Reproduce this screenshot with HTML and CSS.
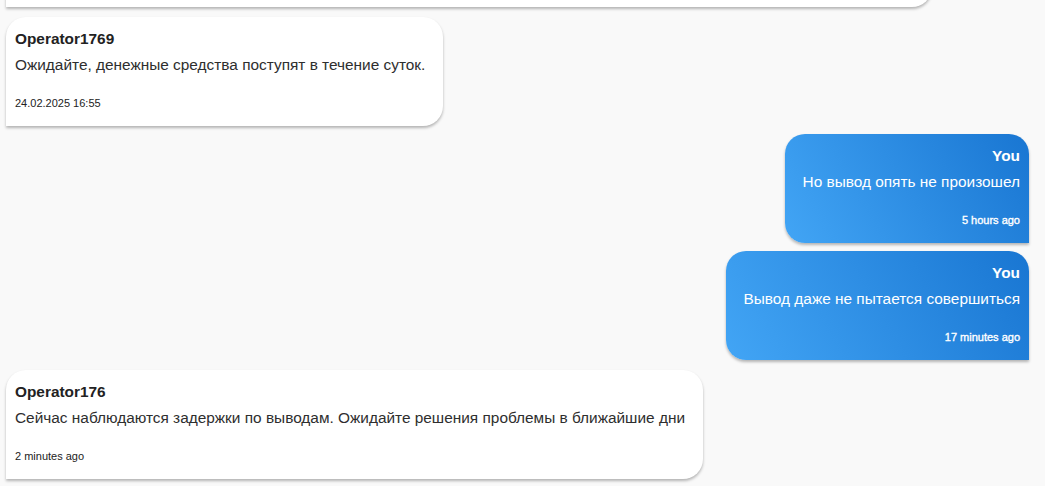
FILE: index.html
```html
<!DOCTYPE html>
<html lang="ru">
<head>
<meta charset="utf-8">
<title>Chat</title>
<link rel="stylesheet" href="styles.css">
</head>
<body>
<div class="chat">
  <div class="msg msg-op msg-cut" aria-hidden="true"></div>
  <div class="msg msg-op">
    <div class="name">Operator1769</div>
    <div class="text">Ожидайте, денежные средства поступят в течение суток.</div>
    <div class="time">24.02.2025 16:55</div>
  </div>
  <div class="msg msg-me">
    <div class="name">You</div>
    <div class="text">Но вывод опять не произошел</div>
    <div class="time">5 hours ago</div>
  </div>
  <div class="msg msg-me">
    <div class="name">You</div>
    <div class="text">Вывод даже не пытается совершиться</div>
    <div class="time">17 minutes ago</div>
  </div>
  <div class="msg msg-op msg-last">
    <div class="name">Operator176</div>
    <div class="text">Сейчас наблюдаются задержки по выводам. Ожидайте решения проблемы в ближайшие дни</div>
    <div class="time">2 minutes ago</div>
  </div>
</div>
</body>
</html>
```
FILE: styles.css
```css
html, body {
  margin: 0;
  padding: 0;
  background: #f9f9f9;
  overflow: hidden;
  height: 486px;
}
body {
  font-family: "Liberation Sans", Arial, sans-serif;
  color: #222222;
}
.chat {
  display: flex;
  flex-direction: column;
  gap: 8px;
  padding: 0 16px 0 6px;
}
.msg {
  display: flex;
  flex-direction: column;
  box-sizing: border-box;
  height: 109px;
  padding: 12px 18px 0 9px;
  border-radius: 20px 20px 20px 0;
  background: #ffffff;
  box-shadow: 0 2px 3px rgba(0, 0, 0, 0.28);
  max-width: 100%;
}
.msg-op {
  align-self: flex-start;
}
.msg-cut {
  margin-top: -102px;
  margin-bottom: 2px;
  width: 926px;
}
.msg-last {
  margin-top: 2px;
}
.msg-me {
  align-self: flex-end;
  padding: 12px 9px 0 18px;
  border-radius: 20px 20px 0 20px;
  background: linear-gradient(60deg, #42a5f5 0%, #1976d2 100%);
  color: #ffffff;
  text-align: right;
}
.name {
  font-size: 15.4px;
  font-weight: 700;
  line-height: 20px;
}
.text {
  margin-top: 5px;
  font-size: 15.4px;
  line-height: 22px;
  white-space: nowrap;
  color: #2e2e2e;
}
.msg-me .text {
  color: #ffffff;
}
.time {
  margin-top: 19px;
  font-size: 11px;
  line-height: 16px;
}
.msg-me .time {
  -webkit-text-stroke: 0.35px #ffffff;
}
```
